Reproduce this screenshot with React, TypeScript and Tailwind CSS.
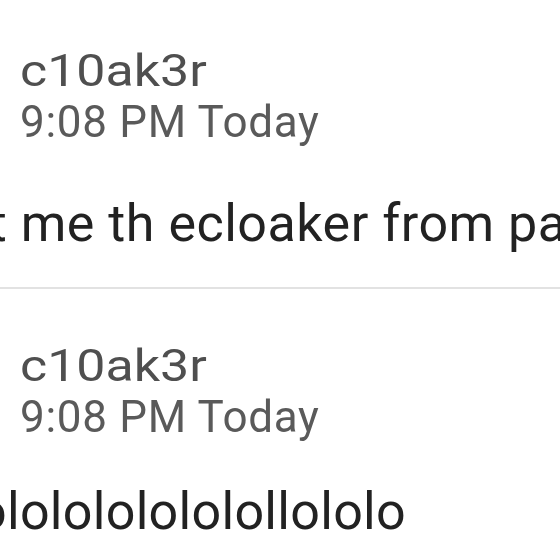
import React from "react";

const font = { fontFamily: "Roboto, 'Liberation Sans', sans-serif" };

function Header() {
  return (
    <div className="pl-5">
      <div className="text-[44px] leading-[52px] text-[#4f4f4f]">
        <span className="inline-block origin-left scale-x-[1.18]">c10ak3r</span>
      </div>
      <div className="text-[44px] leading-[50px] tracking-[0.7px] text-[#5a5a5a]">9:08 PM Today</div>
    </div>
  );
}

export default function App() {
  return (
    <div className="h-[560px] w-[560px] overflow-hidden bg-white blur-[0.6px]" style={font}>
      <div className="pt-[45px]">
        <Header />
        <div className="-ml-[70px] mt-[47px] whitespace-nowrap text-[52px] leading-[60px] tracking-[0.5px] text-[#222222]">
          got me th ecloaker from pack
        </div>
      </div>
      <div className="mt-[33px] h-[2px] bg-[#e2e2e2]" />
      <div className="pt-[51px]">
        <Header />
        <div className="-ml-[23px] mt-[40px] whitespace-nowrap text-[52px] leading-[60px] tracking-[0.3px] text-[#222222]">
          ololololololollololo
        </div>
      </div>
    </div>
  );
}
